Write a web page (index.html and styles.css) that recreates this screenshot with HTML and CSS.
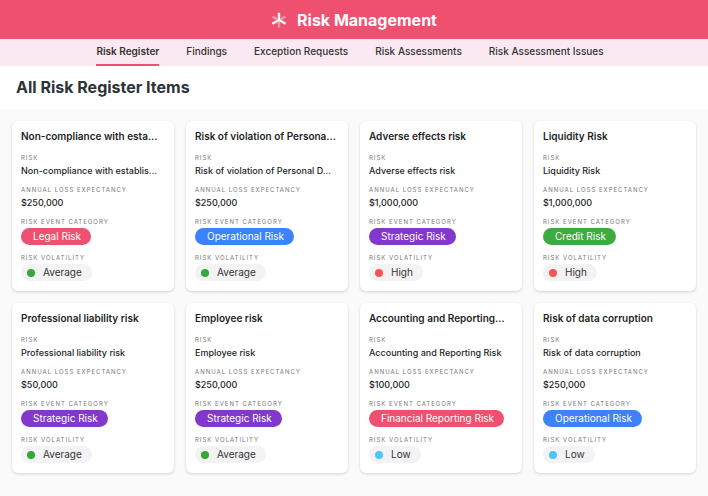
FILE: index.html
```html
<!DOCTYPE html>
<html lang="en">

<head>
    <meta charset="UTF-8">
    <meta name="viewport" content="width=device-width, initial-scale=1.0">
    <title>Risk Management</title>
    <link rel="stylesheet" href="styles.css">
</head>

<body>

    <header class="top-bar">
        <svg class="logo" viewBox="0 0 16 16" aria-hidden="true">
            <g fill="none" stroke="#fff" stroke-width="2.400">
                <path d="M8 8.500V0.800M8 8L1.400 11.800M8 8l6.600 3.800" />
                <path d="M8 10v5.400M6.200 7.200L1.600 4.600M9.800 7.200l4.600-2.600" opacity="0.400" />
            </g>
        </svg>
        <span class="app-name">Risk Management</span>
    </header>

    <nav class="tabs">
        <a href="#" class="active">Risk Register</a>
        <a href="#">Findings</a>
        <a href="#">Exception Requests</a>
        <a href="#">Risk Assessments</a>
        <a href="#">Risk Assessment Issues</a>
    </nav>

    <div class="page-title">
        <h1>All Risk Register Items</h1>
    </div>

    <main class="cards" id="cards"></main>

    <script src="script.js"></script>
</body>

</html>
```
FILE: styles.css
```css
* {
    box-sizing: border-box;
}

body {
    margin: 0;
    min-height: 100vh;
    background: #fafafa;
    color: #1d1f25;
    font-family: Inter, "Liberation Sans", sans-serif;
}

.top-bar {
    display: flex;
    align-items: center;
    justify-content: center;
    gap: 10px;
    height: 39px;
    background: #ef5070;
    color: #fff;
}

.logo {
    width: 16px;
    height: 16px;
}

.app-name {
    font-size: 16px;
    font-weight: 700;
}

.tabs {
    display: flex;
    justify-content: center;
    gap: 27px;
    height: 27px;
    padding: 0 16px 0 8px;
    background: #fae9f0;
}

.tabs a {
    color: #333;
    font-size: 10px;
    font-weight: 500;
    line-height: 25px;
    text-decoration: none;
    white-space: nowrap;
    border-bottom: 2px solid transparent;
}

.tabs .active {
    font-weight: 600;
    border-bottom-color: #ef5070;
}

.page-title {
    padding: 9px 16px 10px;
    background: #fff;
}

h1 {
    margin: 0;
    color: #2d3336;
    font-size: 16px;
    font-weight: 700;
    line-height: 24px;
}

.cards {
    display: grid;
    grid-template-columns: repeat(4, minmax(0, 1fr));
    gap: 12px;
    padding: 12px;
}

.card {
    padding: 8px 9px;
    background: #fff;
    border-radius: 6px;
    box-shadow: 0 1px 3px rgba(0, 0, 0, 0.16);
}

h2 {
    margin: 0 0 10px;
    font-size: 10px;
    font-weight: 600;
    line-height: 14px;
}

h2,
dd {
    white-space: nowrap;
}

dl {
    display: grid;
    gap: 6px;
    margin: 0;
}

dt {
    color: #777;
    font-size: 6px;
    line-height: 10px;
    letter-spacing: 1px;
    text-transform: uppercase;
}

dd {
    margin: 0;
    font-size: 9px;
    font-weight: 500;
    line-height: 16px;
}

.pill-cell {
    display: flex;
    padding: 1px 0 2px;
}

.pill {
    padding: 0 10px 0 12px;
    border-radius: 9px;
    color: #fff;
    font-size: 10px;
    font-weight: 400;
    line-height: 17px;
}

.legal,
.financial {
    background: #ef5070;
}

.operational {
    background: #3b82fb;
}

.strategic {
    background: #8338cd;
}

.credit {
    background: #3eab40;
}

.volatility {
    display: flex;
    align-items: center;
    gap: 8px;
    padding-left: 6px;
    background: #f3f3f5;
    color: #333;
}

.volatility::before {
    content: "";
    width: 8px;
    height: 8px;
    border-radius: 50%;
}

.average::before {
    background: #34a936;
}

.high::before {
    background: #ff5252;
}

.low::before {
    background: #4cc6fc;
}
```
FILE: script.js
```js
const risks = [
    { title: 'Non-compliance with esta...', risk: 'Non-compliance with establis...', loss: '$250,000', category: 'Legal', volatility: 'Average' },
    { title: 'Risk of violation of Persona...', risk: 'Risk of violation of Personal D...', loss: '$250,000', category: 'Operational', volatility: 'Average' },
    { title: 'Adverse effects risk', risk: 'Adverse effects risk', loss: '$1,000,000', category: 'Strategic', volatility: 'High' },
    { title: 'Liquidity Risk', risk: 'Liquidity Risk', loss: '$1,000,000', category: 'Credit', volatility: 'High' },
    { title: 'Professional liability risk', risk: 'Professional liability risk', loss: '$50,000', category: 'Strategic', volatility: 'Average' },
    { title: 'Employee risk', risk: 'Employee risk', loss: '$250,000', category: 'Strategic', volatility: 'Average' },
    { title: 'Accounting and Reporting...', risk: 'Accounting and Reporting Risk', loss: '$100,000', category: 'Financial Reporting', volatility: 'Low' },
    { title: 'Risk of data corruption', risk: 'Risk of data corruption', loss: '$250,000', category: 'Operational', volatility: 'Low' }
];

const cards = document.getElementById('cards');

risks.forEach(item => {
    const card = document.createElement('article');
    card.className = 'card';
    card.innerHTML = `
        <h2>${item.title}</h2>
        <dl>
            <div><dt>Risk</dt><dd>${item.risk}</dd></div>
            <div><dt>Annual loss expectancy</dt><dd>${item.loss}</dd></div>
            <div>
                <dt>Risk event category</dt>
                <dd class="pill-cell"><span class="pill ${item.category.split(' ')[0].toLowerCase()}">${item.category} Risk</span></dd>
            </div>
            <div>
                <dt>Risk volatility</dt>
                <dd class="pill-cell"><span class="pill volatility ${item.volatility.toLowerCase()}">${item.volatility}</span></dd>
            </div>
        </dl>
    `;
    cards.appendChild(card);
});
```
